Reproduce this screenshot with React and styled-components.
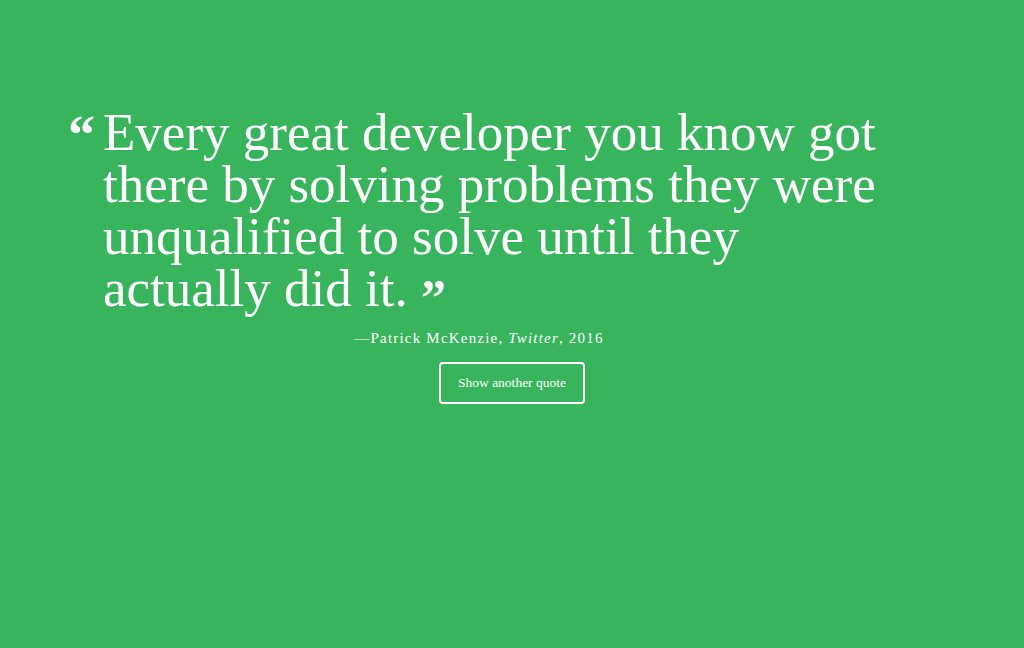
import React from "react";
import styled, { createGlobalStyle } from "styled-components";

const GlobalStyle = createGlobalStyle`
  html, body { margin: 0; padding: 0; }
  body { background: #38b55c; font-family: "Liberation Serif", "Times New Roman", serif; }
`;

const Page = styled.main`
  min-height: 648px;
  background: #38b55c;
  color: #ffffff;
  padding-top: 106px;
  box-sizing: border-box;
`;

const QuoteBlock = styled.section`
  width: 822px;
  margin-left: 68px;
  display: flex;
  flex-direction: column;
`;

const QuoteRow = styled.div`
  display: flex;
  align-items: flex-start;
`;

const OpenMark = styled.span`
  flex: 0 0 35px;
  font-weight: 700;
  font-size: 54px;
  line-height: 1;
  margin-top: 2px;
`;

const QuoteText = styled.blockquote`
  margin: 0;
  font-size: 53px;
  line-height: 52px;
  font-weight: 400;
  max-width: 800px;
`;

const CloseMark = styled.span`
  display: inline-block;
  font-weight: 700;
  font-size: 50px;
  line-height: 30px;
  vertical-align: top;
  margin-top: 20px;
`;

const Author = styled.p`
  margin: 14px 0 0;
  text-align: center;
  font-size: 15px;
  letter-spacing: 1.2px;
  line-height: 20px;
`;

const ButtonRow = styled.div`
  display: flex;
  justify-content: center;
  margin-top: 14px;
`;

const Button = styled.button`
  width: 146px;
  height: 42px;
  background: transparent;
  border: 2px solid #ffffff;
  border-radius: 4px;
  color: #ffffff;
  font-family: "Liberation Serif", "Times New Roman", serif;
  font-size: 13.5px;
  cursor: pointer;
`;

export default function App() {
  return (
    <>
      <GlobalStyle />
      <Page>
        <QuoteBlock>
          <QuoteRow>
            <OpenMark>“</OpenMark>
            <QuoteText>
              Every great developer you know got there by solving problems they
              were unqualified to solve until they actually did it.{" "}
              <CloseMark>”</CloseMark>
            </QuoteText>
          </QuoteRow>
          <Author>
            —Patrick McKenzie, <em>Twitter</em>, 2016
          </Author>
        </QuoteBlock>
        <ButtonRow>
          <Button>Show another quote</Button>
        </ButtonRow>
      </Page>
    </>
  );
}
